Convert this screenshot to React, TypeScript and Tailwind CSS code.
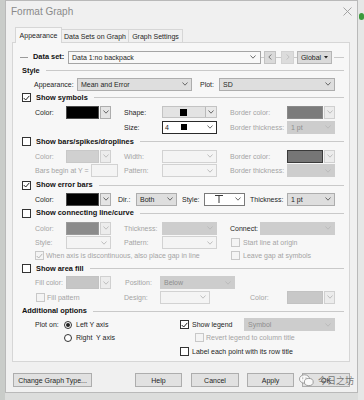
import React from "react";

const DARK = "text-[#1e1e1e]";
const DIM = "text-[#a4a4a4]";

function Chev({ off }: { off?: boolean }) {
  return (
    <svg width="6" height="4" viewBox="0 0 6 4" className="shrink-0">
      <path d="M0.5 0.5 L3 3.2 L5.5 0.5" fill="none" stroke={off ? "#b8b8b8" : "#5a5a5a"} strokeWidth="0.9" />
    </svg>
  );
}

function Check({ on, off }: { on?: boolean; off?: boolean }) {
  return (
    <div
      className={`w-[9px] h-[9px] shrink-0 border flex items-center justify-center ${
        off ? "border-[#c8c8c8] bg-[#f4f4f4]" : "border-[#333] bg-white"
      }`}
    >
      {on && (
        <svg width="7" height="6" viewBox="0 0 7 6">
          <path d="M0.7 3 L2.7 5 L6.3 0.9" fill="none" stroke={off ? "#b4b4b4" : "#222"} strokeWidth="1" />
        </svg>
      )}
    </div>
  );
}

function Radio({ on }: { on?: boolean }) {
  return (
    <div className="w-[8px] h-[8px] shrink-0 rounded-full border border-[#333] bg-white flex items-center justify-center">
      {on && <div className="w-[4px] h-[4px] rounded-full bg-[#222]" />}
    </div>
  );
}

function Combo({ w, tone, text }: { w: string; tone: string; text?: string }) {
  const off = tone === "off" || tone === "offFill";
  const tones: Record<string, string> = {
    gray: "bg-[#dedede] border-[#adadad] text-[#1e1e1e]",
    white: "bg-white border-[#7a7a7a] text-[#1e1e1e]",
    off: "bg-[#f4f4f4] border-[#d2d2d2] text-[#a0a0a0]",
    offFill: "bg-[#cdcdcd] border-[#cdcdcd] text-[#8e8e8e]",
  };
  return (
    <div className={`flex items-center h-[13px] shrink-0 border ${w} ${tones[tone]}`}>
      <div className="flex-1 pl-[3px] whitespace-nowrap leading-none">{text}</div>
      <div className="pr-[3px]">
        <Chev off={off} />
      </div>
    </div>
  );
}

function ColorPick({ w, sw, off }: { w: string; sw: string; off?: boolean }) {
  return (
    <div className={`flex h-[13px] shrink-0 ${w}`}>
      <div className={`flex-1 border ${sw}`} />
      <div
        className={`w-[11px] ml-px border flex items-center justify-center ${
          off ? "border-[#d0d0d0] bg-[#ececec]" : "border-[#adadad] bg-[#e4e4e4]"
        }`}
      >
        <Chev off={off} />
      </div>
    </div>
  );
}

function L({ w, dim, children }: { w: string; dim?: boolean; children?: React.ReactNode }) {
  return <div className={`shrink-0 whitespace-nowrap leading-none ${w} ${dim ? DIM : DARK}`}>{children}</div>;
}

function Section({ h, on, title, box = true }: { h: string; on?: boolean; title: string; box?: boolean }) {
  return (
    <div className={`flex items-center pl-[9px] pr-[5px] ${h}`}>
      {box && <Check on={on} />}
      <div className={`font-bold text-[7.4px] leading-none whitespace-nowrap text-[#111] ${box ? "ml-[5px]" : ""}`}>
        {title}
      </div>
      <div className="flex-1 h-px bg-[#c9c9c9] ml-[6px]" />
    </div>
  );
}

function Btn({ w, ml, children }: { w: string; ml: string; children: React.ReactNode }) {
  return (
    <div
      className={`h-[14px] ${w} ${ml} shrink-0 border border-[#adadad] bg-[#e1e1e1] flex items-center justify-center leading-none ${DARK}`}
    >
      {children}
    </div>
  );
}

export default function App() {
  return (
    <div className="w-[364px] h-[400px] bg-[#dcdddc] overflow-hidden relative flex font-['Liberation_Sans',sans-serif] text-[7px]">
      <div className="w-[5px] shrink-0 bg-[#c9ccc9]" />
      <div className="w-[353px] h-[393px] shrink-0 bg-[#f0f0f0] border border-[#b9b9b9] flex flex-col">
        {/* title bar */}
        <div className="h-[21px] flex items-center pl-[5px] pr-[5px]">
          <div className="text-[10px] text-[#8a8a8a] leading-none">Format Graph</div>
          <svg width="9" height="9" viewBox="0 0 9 9" className="ml-auto">
            <path d="M0.5 0.5 L8.5 8.5 M8.5 0.5 L0.5 8.5" stroke="#9a9a9a" strokeWidth="0.9" />
          </svg>
        </div>

        {/* tabs */}
        <div className="mt-[5px] h-[15px] flex items-end pl-[9px]">
          <div className="relative z-10 -mb-px h-[16px] w-[47px] border border-b-0 border-[#d6d6d6] bg-[#f7f7f7] flex items-center justify-center text-[#1e1e1e] leading-none">
            Appearance
          </div>
          <div className="h-[13px] w-[67px] border border-l-0 border-b-0 border-[#d6d6d6] bg-[#f0f0f0] flex items-center justify-center text-[#1e1e1e] leading-none">
            Data Sets on Graph
          </div>
          <div className="h-[13px] w-[54px] border border-l-0 border-b-0 border-[#d6d6d6] bg-[#f0f0f0] flex items-center justify-center text-[#1e1e1e] leading-none">
            Graph Settings
          </div>
        </div>

        {/* panel */}
        <div className="ml-[6px] w-[338px] h-[320px] border border-[#d6d6d6] bg-[#f7f7f7] pt-[7px] flex flex-col">
          {/* data set */}
          <div className="flex items-center h-[14px] pl-[7px] pr-[5px]">
            <div className="w-[8px] h-px bg-[#9a9a9a]" />
            <div className="ml-[5px] w-[35px] font-bold text-[7.4px] leading-none whitespace-nowrap text-[#111]">Data set:</div>
            <div className="w-[193px] h-[13px] border border-[#a5a5a5] bg-[#f8f8f8] flex items-center">
              <div className="flex-1 pl-[3px] leading-none text-[#1e1e1e]">Data 1:no backpack</div>
              <div className="pr-[4px]">
                <Chev />
              </div>
            </div>
            <div className="w-[3px] h-px bg-[#c9c9c9]" />
            <div className="w-[12px] h-[13px] border border-[#c2c2c2] bg-[#dadada] flex items-center justify-center">
              <svg width="4" height="6" viewBox="0 0 4 6">
                <path d="M3.3 0.5 L0.8 3 L3.3 5.5" fill="none" stroke="#6a6a6a" strokeWidth="0.9" />
              </svg>
            </div>
            <div className="w-[5px] h-px bg-[#c9c9c9]" />
            <div className="w-[13px] h-[13px] border border-[#d2d2d2] bg-[#dcdcdc] flex items-center justify-center">
              <svg width="4" height="6" viewBox="0 0 4 6">
                <path d="M0.7 0.5 L3.2 3 L0.7 5.5" fill="none" stroke="#bcbcbc" strokeWidth="0.9" />
              </svg>
            </div>
            <div className="w-[3px] h-px bg-[#c9c9c9]" />
            <div className="w-[35px] h-[13px] border border-[#b5b5b5] bg-[#dadada] flex items-center justify-center gap-[3px] leading-none text-[#1e1e1e]">
              <span>Global</span>
              <svg width="4" height="3" viewBox="0 0 4 3">
                <path d="M0 0 L4 0 L2 2.5 Z" fill="#222" />
              </svg>
            </div>
            <div className="flex-1 ml-[2px] h-px bg-[#c9c9c9]" />
          </div>

          <Section h="h-[13px]" title="Style" box={false} />

          {/* appearance */}
          <div className="flex items-center h-[14px] pl-[21px]">
            <L w="w-[43px]">Appearance:</L>
            <Combo w="w-[115px]" tone="gray" text="Mean and Error" />
            <L w="w-[19px] ml-[8px]">Plot:</L>
            <Combo w="w-[116px]" tone="gray" text="SD" />
          </div>

          <Section h="h-[13px]" on title="Show symbols" />

          <div className="flex items-center h-[16px] pl-[22px]">
            <L w="w-[31px]">Color:</L>
            <ColorPick w="w-[45px]" sw="bg-black border-[#4a4a4a]" />
            <L w="w-[38px] ml-[13px]">Shape:</L>
            <div className="flex h-[12px] w-[55px] shrink-0 border border-[#c3c3c3] bg-[#e3e3e3]">
              <div className="flex-1 flex items-center pl-[17px]">
                <div className="w-[7px] h-[7px] bg-black" />
              </div>
              <div className="w-[11px] border-l border-[#b9b9b9] bg-[#e9e9e9] flex items-center justify-center">
                <Chev />
              </div>
            </div>
            <L w="w-[57px] ml-[13px]" dim>
              Border color:
            </L>
            <ColorPick w="w-[48px]" sw="bg-[#7b7b7b] border-[#8a8a8a]" off />
          </div>

          <div className="flex items-center h-[14px] pl-[22px]">
            <div className="w-[76px] shrink-0" />
            <L w="w-[38px] ml-[13px]">Size:</L>
            <div className="flex items-center h-[13px] w-[55px] shrink-0 border border-[#2a2a2a] bg-white">
              <span className="pl-[2px] leading-none text-[#1e1e1e]">4</span>
              <div className="ml-[12px] w-[6px] h-[6px] bg-black" />
              <div className="ml-auto pr-[3px]">
                <Chev />
              </div>
            </div>
            <L w="w-[57px] ml-[13px]" dim>
              Border thickness:
            </L>
            <Combo w="w-[48px]" tone="offFill" text="1 pt" />
          </div>

          <Section h="h-[15px]" title="Show bars/spikes/droplines" />

          <div className="flex items-center h-[14px] pl-[22px]">
            <L w="w-[31px]" dim>
              Color:
            </L>
            <ColorPick w="w-[45px]" sw="bg-[#d0d0d0] border-[#c8c8c8]" off />
            <L w="w-[38px] ml-[13px]" dim>
              Width:
            </L>
            <Combo w="w-[55px]" tone="off" />
            <L w="w-[57px] ml-[13px]" dim>
              Border color:
            </L>
            <ColorPick w="w-[48px]" sw="bg-[#767676] border-[#3a3a3a]" off />
          </div>

          <div className="flex items-center h-[15px] pl-[22px]">
            <L w="w-[56px]" dim>
              Bars begin at Y =
            </L>
            <div className="w-[27px] h-[13px] shrink-0 border border-[#d2d2d2] bg-[#f4f4f4]" />
            <L w="w-[38px] ml-[6px]" dim>
              Pattern:
            </L>
            <Combo w="w-[55px]" tone="off" />
            <L w="w-[57px] ml-[13px]" dim>
              Border thickness:
            </L>
            <Combo w="w-[48px]" tone="offFill" />
          </div>

          <Section h="h-[14px]" on title="Show error bars" />

          <div className="flex items-center h-[14px] pl-[22px]">
            <L w="w-[31px]">Color:</L>
            <ColorPick w="w-[45px]" sw="bg-black border-[#4a4a4a]" />
            <L w="w-[18px] ml-[7px]">Dir.:</L>
            <Combo w="w-[41px]" tone="gray" text="Both" />
            <L w="w-[22px] ml-[5px]">Style:</L>
            <div className="flex items-center h-[13px] w-[41px] shrink-0 border border-[#7a7a7a] bg-white">
              <svg width="8" height="8" viewBox="0 0 8 8" className="ml-[10px]">
                <path d="M0 0.5 L8 0.5 M4 0.5 L4 8" stroke="#222" strokeWidth="0.9" />
              </svg>
              <div className="ml-auto pr-[3px]">
                <Chev />
              </div>
            </div>
            <L w="w-[37px] ml-[5px]">Thickness:</L>
            <Combo w="w-[48px]" tone="gray" text="1 pt" />
          </div>

          <Section h="h-[14px]" title="Show connecting line/curve" />

          <div className="flex items-center h-[16px] pl-[22px]">
            <L w="w-[31px]" dim>
              Color:
            </L>
            <ColorPick w="w-[45px]" sw="bg-[#8b8b8b] border-[#9a9a9a]" off />
            <L w="w-[38px] ml-[13px]" dim>
              Thickness:
            </L>
            <Combo w="w-[55px]" tone="offFill" />
            <L w="w-[30px] ml-[13px]">Connect:</L>
            <Combo w="w-[75px]" tone="offFill" />
          </div>

          <div className="flex items-center h-[13px] pl-[22px]">
            <L w="w-[31px]" dim>
              Style:
            </L>
            <Combo w="w-[45px]" tone="off" />
            <L w="w-[38px] ml-[13px]" dim>
              Pattern:
            </L>
            <Combo w="w-[55px]" tone="off" />
            <div className="ml-[14px]">
              <Check off />
            </div>
            <L w="ml-[3px]" dim>
              Start line at origin
            </L>
          </div>

          <div className="flex items-center h-[13px] pl-[22px]">
            <div className="w-[196px] shrink-0 flex items-center">
              <Check on off />
              <L w="ml-[2px]" dim>
                When axis is discontinuous, also place gap in line
              </L>
            </div>
            <Check off />
            <L w="ml-[3px]" dim>
              Leave gap at symbols
            </L>
          </div>

          <Section h="h-[13px]" title="Show area fill" />

          <div className="flex items-center h-[15px] pl-[22px]">
            <L w="w-[31px]" dim>
              Fill color:
            </L>
            <ColorPick w="w-[45px]" sw="bg-[#c6c6c6] border-[#c2c2c2]" off />
            <L w="w-[35px] ml-[14px]" dim>
              Position:
            </L>
            <Combo w="w-[75px]" tone="offFill" text="Below" />
          </div>

          <div className="flex items-center h-[14px] pl-[22px]">
            <div className="w-[76px] shrink-0 flex items-center pl-[1px]">
              <Check off />
              <L w="ml-[2px]" dim>
                Fill pattern
              </L>
            </div>
            <L w="w-[36px] ml-[13px]" dim>
              Design:
            </L>
            <Combo w="w-[50px]" tone="off" />
            <L w="w-[37px] ml-[40px]" dim>
              Color:
            </L>
            <ColorPick w="w-[48px]" sw="bg-[#c8c8c8] border-[#c2c2c2]" off />
          </div>

          <Section h="h-[14px]" title="Additional options" box={false} />

          <div className="flex items-center h-[13px] pl-[22px]">
            <div className="w-[145px] shrink-0 flex items-center">
              <L w="w-[29px]">Plot on:</L>
              <Radio on />
              <L w="ml-[4px]">Left Y axis</L>
            </div>
            <Check on />
            <L w="w-[52px] ml-[3px]">Show legend</L>
            <Combo w="w-[91px]" tone="offFill" text="Symbol" />
          </div>

          <div className="flex items-center h-[13px] pl-[22px]">
            <div className="w-[145px] shrink-0 flex items-center">
              <div className="w-[29px] shrink-0" />
              <Radio />
              <L w="ml-[4px]">Right&nbsp; Y axis</L>
            </div>
            <div className="ml-[15px]">
              <Check off />
            </div>
            <L w="ml-[2px]" dim>
              Revert legend to column title
            </L>
          </div>

          <div className="flex items-center h-[14px] pl-[22px]">
            <div className="w-[145px] shrink-0" />
            <Check />
            <L w="ml-[3px]">Label each point with its row title</L>
          </div>
        </div>

        {/* buttons */}
        <div className="mt-[11px] flex items-center pl-[7px]">
          <Btn w="w-[79px]" ml="">
            Change Graph Type...
          </Btn>
          <Btn w="w-[47px]" ml="ml-[43px]">
            Help
          </Btn>
          <Btn w="w-[48px]" ml="ml-[9px]">
            Cancel
          </Btn>
          <Btn w="w-[47px]" ml="ml-[8px]">
            Apply
          </Btn>
          <Btn w="w-[48px]" ml="ml-[8px]">
            OK
          </Btn>
        </div>
      </div>
      <div className="flex-1 bg-[#e6e7e6] flex flex-col items-center pt-[13px]">
        <div className="w-[5px] h-[7px] rounded-full bg-[#3c9a3c]" />
      </div>

      {/* watermark */}
      <div className="absolute left-[299px] top-[374px] flex items-center gap-[4px] opacity-80">
        <svg width="15" height="13" viewBox="0 0 15 13">
          <ellipse cx="5.5" cy="5" rx="5" ry="4.2" fill="white" stroke="#777" strokeWidth="0.8" />
          <ellipse cx="9.8" cy="8" rx="4.4" ry="3.6" fill="white" stroke="#777" strokeWidth="0.8" />
          <circle cx="3.8" cy="4" r="0.6" fill="#777" />
          <circle cx="7" cy="4" r="0.6" fill="#777" />
        </svg>
        <span className="text-[9px] leading-none text-[#5e5e5e] font-['Noto_Sans_CJK_SC',sans-serif]">今日之坊</span>
      </div>
    </div>
  );
}
